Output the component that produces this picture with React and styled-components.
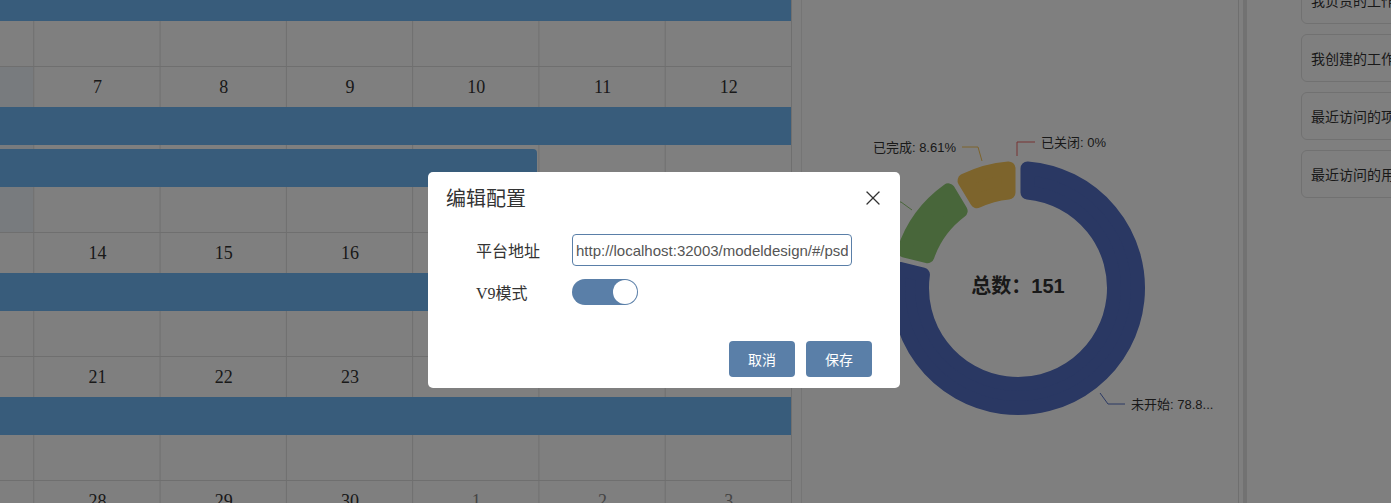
import React from "react";
import styled, { createGlobalStyle } from "styled-components";
import { X } from "lucide-react";

const GlobalStyle = createGlobalStyle`
  html, body {
    margin: 0;
    padding: 0;
    background: #fff;
    overflow: hidden;
  }
  body {
    font-family: "Liberation Serif", "Noto Sans CJK SC", serif;
    color: #333;
  }
  * {
    box-sizing: border-box;
  }
`;

const Page = styled.div`
  display: flex;
  width: 1391px;
  height: 503px;
  overflow: hidden;
`;

/* ---------- calendar ---------- */

const CalendarViewport = styled.div`
  flex: none;
  width: 792px;
  height: 100%;
  overflow: hidden;
  border-right: 1px solid #dedede;
`;

const CalendarBody = styled.div`
  width: 884px;
  margin: -58px 0 0 -92px;
`;

const Week = styled.div`
  display: grid;
  grid-template-columns: repeat(7, 1fr);
  grid-template-rows: 40px ${(p) => (p.$bars ? `repeat(${p.$bars}, auto)` : "")} 45px;
  border-top: 1px solid #dedede;
  background-image: linear-gradient(
    to right,
    transparent calc(100% - 1px),
    #dedede calc(100% - 1px)
  );
  background-size: calc(100% / 7) 100%;
  background-repeat: repeat-x;
`;

const TodayCell = styled.div`
  grid-column: ${(p) => p.$col};
  grid-row: 1 / -1;
  margin-right: 1px;
  background: #f0f7fd;
`;

const DayNumber = styled.div`
  grid-row: 1;
  grid-column: ${(p) => p.$col};
  display: flex;
  align-items: center;
  justify-content: center;
  font-size: 18px;
  color: ${(p) => (p.$muted ? "#8a8a8a" : "#333")};
`;

const EventBar = styled.div`
  grid-row: ${(p) => p.$row};
  grid-column: ${(p) => `${p.$from} / ${p.$to}`};
  height: 38px;
  margin-top: ${(p) => (p.$row > 2 ? 4 : 0)}px;
  margin-right: ${(p) => (p.$closed ? 2 : 0)}px;
  border-radius: ${(p) => (p.$closed ? "0 4px 4px 0" : "0")};
  background: #70b8f6;
`;

const weeks = [
  { days: [30, 31, 1, 2, 3, 4, 5], muted: [0, 1], bars: [{ from: 1, to: 8 }] },
  {
    days: [6, 7, 8, 9, 10, 11, 12],
    today: 1,
    bars: [
      { from: 1, to: 8 },
      { from: 1, to: 6, closed: true },
    ],
  },
  { days: [13, 14, 15, 16, 17, 18, 19], bars: [{ from: 1, to: 8 }] },
  { days: [20, 21, 22, 23, 24, 25, 26], bars: [{ from: 1, to: 8 }] },
  { days: [27, 28, 29, 30, 1, 2, 3], muted: [4, 5, 6], bars: [] },
];

const Calendar = () => (
  <CalendarViewport>
    <CalendarBody>
      {weeks.map((week, wi) => (
        <Week key={wi} $bars={week.bars.length}>
          {week.today && <TodayCell $col={week.today} />}
          {week.days.map((d, i) => (
            <DayNumber
              key={i}
              $col={i + 1}
              $muted={week.muted && week.muted.includes(i)}
            >
              {d}
            </DayNumber>
          ))}
          {week.bars.map((bar, bi) => (
            <EventBar
              key={bi}
              $row={bi + 2}
              $from={bar.from}
              $to={bar.to}
              $closed={bar.closed}
            />
          ))}
        </Week>
      ))}
    </CalendarBody>
  </CalendarViewport>
);

/* ---------- chart ---------- */

const ChartPanel = styled.div`
  flex: none;
  width: 438px;
  height: 100%;
  margin-left: 9px;
  border-left: 1px solid #ebebeb;
  border-right: 1px solid #dedede;
`;

const ChartSvg = styled.svg`
  display: block;
`;

const ChartLabel = styled.text`
  font-family: "Liberation Sans", "Noto Sans CJK SC", sans-serif;
  font-size: 13px;
  fill: #333;
`;

const ChartTotal = styled.text`
  font-family: "Liberation Sans", "Noto Sans CJK SC", sans-serif;
  font-size: 20px;
  font-weight: 700;
  fill: #333;
`;

const CX = 216;
const CY = 288;
const R_OUT = 127;
const R_IN = 89;

const pt = (r, a) => {
  const t = (a * Math.PI) / 180;
  return `${(CX + r * Math.sin(t)).toFixed(2)} ${(CY - r * Math.cos(t)).toFixed(2)}`;
};

// annular sector shrunk by corner radius, stroked back out with round joins
const sectorPath = (a0, a1, c, gap) => {
  const ro = R_OUT - c;
  const ri = R_IN + c;
  const dOut = (((gap / 2 + c) / ro) * 180) / Math.PI;
  const dIn = (((gap / 2 + c) / ri) * 180) / Math.PI;
  const s0 = a0 + dOut;
  const e0 = a1 - dOut;
  const s1 = a0 + dIn;
  const e1 = a1 - dIn;
  return [
    `M ${pt(ro, s0)}`,
    `A ${ro} ${ro} 0 ${e0 - s0 > 180 ? 1 : 0} 1 ${pt(ro, e0)}`,
    `L ${pt(ri, e1)}`,
    `A ${ri} ${ri} 0 ${e1 - s1 > 180 ? 1 : 0} 0 ${pt(ri, s1)}`,
    "Z",
  ].join(" ");
};

const slices = [
  { name: "未开始", color: "#5470c6", from: 0, to: 283.7 },
  { name: "进行中", color: "#91cc75", from: 283.7, to: 329 },
  { name: "已完成", color: "#fac858", from: 329, to: 360 },
];

const labels = [
  { text: "已关闭: 0%", color: "#ee6666", line: "215,156 215,142 233,142", x: 239, y: 142, anchor: "start" },
  { text: "已完成: 8.61%", color: "#fac858", line: "180,161 176,147 160,147", x: 154, y: 147, anchor: "end" },
  { text: "进行中: 12.58%", color: "#91cc75", line: "110,210 99,202 83,202", x: 77, y: 202, anchor: "end" },
  { text: "未开始: 78.8...", color: "#5470c6", line: "298,393 306,404 323,404", x: 329, y: 404, anchor: "start" },
];

const StatusChart = () => (
  <ChartPanel>
    <ChartSvg width="436" height="503" viewBox="0 0 436 503">
      {slices.map((s) => (
        <path
          key={s.name}
          d={sectorPath(s.from, s.to, 7, 5)}
          fill={s.color}
          stroke={s.color}
          strokeWidth="14"
          strokeLinejoin="round"
        />
      ))}
      {labels.map((l) => (
        <g key={l.text}>
          <polyline points={l.line} fill="none" stroke={l.color} strokeWidth="1" />
          <ChartLabel x={l.x} y={l.y} textAnchor={l.anchor} dominantBaseline="central">
            {l.text}
          </ChartLabel>
        </g>
      ))}
      <ChartTotal x={CX} y={CY - 2} textAnchor="middle" dominantBaseline="central">
        总数：151
      </ChartTotal>
    </ChartSvg>
  </ChartPanel>
);

/* ---------- right panel ---------- */

const Splitter = styled.div`
  flex: none;
  width: 4px;
  height: 100%;
  margin-left: 4px;
  background: #e4e4e4;
`;

const SidePanel = styled.div`
  flex: 1;
  min-width: 0;
  padding-left: 54px;
  overflow: hidden;
`;

const CardList = styled.div`
  display: flex;
  flex-direction: column;
  gap: 10px;
  margin-top: -24px;
`;

const QuickCard = styled.div`
  flex: none;
  width: 220px;
  height: 48px;
  display: flex;
  align-items: center;
  padding-left: 9px;
  border: 1px solid #e2e2e2;
  border-radius: 6px;
  font-family: "Noto Sans CJK SC", sans-serif;
  font-size: 14px;
  color: #333;
  white-space: nowrap;
`;

const quickLinks = ["我负责的工作项", "我创建的工作项", "最近访问的项目", "最近访问的用例"];

/* ---------- modal ---------- */

const Mask = styled.div`
  position: fixed;
  inset: 0;
  background: rgba(0, 0, 0, 0.5);
`;

const Dialog = styled.div`
  position: fixed;
  left: 428px;
  top: 172px;
  width: 472px;
  background: #fff;
  border-radius: 5px;
`;

const DialogHeader = styled.div`
  display: flex;
  align-items: center;
  justify-content: space-between;
  padding: 14px 15px 14px 18px;
`;

const DialogTitle = styled.div`
  font-family: "Noto Sans CJK SC", sans-serif;
  font-size: 20px;
  line-height: 24px;
  color: #333;
`;

const CloseButton = styled.button`
  display: flex;
  padding: 0;
  border: none;
  background: none;
  color: #333;
  cursor: pointer;
`;

const DialogBody = styled.div`
  display: flex;
  flex-direction: column;
  gap: 13px;
  padding: 10px 48px 0;
`;

const FormRow = styled.div`
  display: flex;
  align-items: center;
`;

const FieldLabel = styled.label`
  flex: none;
  width: 96px;
  font-size: 16px;
  color: #333;
`;

const TextInput = styled.input`
  width: 281px;
  height: 32px;
  padding: 0 3px;
  border: 1px solid #5a7fa8;
  border-radius: 4px;
  outline: none;
  font-family: "Liberation Sans", sans-serif;
  font-size: 15px;
  color: #555;
`;

const Toggle = styled.div`
  width: 66px;
  height: 26px;
  padding: 1px;
  display: flex;
  justify-content: ${(p) => (p.$on ? "flex-end" : "flex-start")};
  border-radius: 13px;
  background: #5a7fa8;
`;

const ToggleKnob = styled.div`
  width: 24px;
  height: 24px;
  border-radius: 50%;
  background: #fff;
`;

const DialogFooter = styled.div`
  display: flex;
  justify-content: flex-end;
  gap: 11px;
  margin-top: 36px;
  padding: 0 28px 11px;
`;

const PrimaryButton = styled.button`
  width: 66px;
  height: 36px;
  border: none;
  border-radius: 4px;
  background: #5a7fa8;
  color: #fff;
  font-family: "Noto Sans CJK SC", sans-serif;
  font-size: 14px;
  cursor: pointer;
`;

const ConfigDialog = () => (
  <>
    <Mask />
    <Dialog>
      <DialogHeader>
        <DialogTitle>编辑配置</DialogTitle>
        <CloseButton>
          <X size={24} strokeWidth={1.3} />
        </CloseButton>
      </DialogHeader>
      <DialogBody>
        <FormRow>
          <FieldLabel>平台地址</FieldLabel>
          <TextInput defaultValue="http://localhost:32003/modeldesign/#/psd" />
        </FormRow>
        <FormRow>
          <FieldLabel>V9模式</FieldLabel>
          <Toggle $on>
            <ToggleKnob />
          </Toggle>
        </FormRow>
      </DialogBody>
      <DialogFooter>
        <PrimaryButton>取消</PrimaryButton>
        <PrimaryButton>保存</PrimaryButton>
      </DialogFooter>
    </Dialog>
  </>
);

const App = () => (
  <>
    <GlobalStyle />
    <Page>
      <Calendar />
      <StatusChart />
      <Splitter />
      <SidePanel>
        <CardList>
          {quickLinks.map((t) => (
            <QuickCard key={t}>{t}</QuickCard>
          ))}
        </CardList>
      </SidePanel>
    </Page>
    <ConfigDialog />
  </>
);

export default App;
